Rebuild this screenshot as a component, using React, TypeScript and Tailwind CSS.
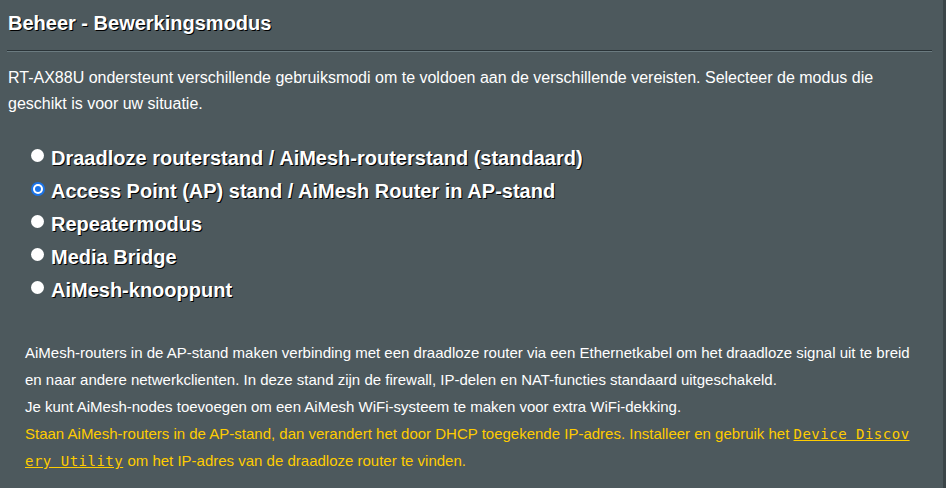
import React from "react";

const modes = [
  "Draadloze routerstand / AiMesh-routerstand (standaard)",
  "Access Point (AP) stand / AiMesh Router in AP-stand",
  "Repeatermodus",
  "Media Bridge",
  "AiMesh-knooppunt",
];

function Radio({ checked }: { checked: boolean }) {
  if (checked) {
    return (
      <span className="inline-flex h-[14px] w-[14px] shrink-0 items-center justify-center rounded-full bg-[#1a73e8]">
        <span className="flex h-[10px] w-[10px] items-center justify-center rounded-full bg-white">
          <span className="h-[6px] w-[6px] rounded-full bg-[#1a73e8]" />
        </span>
      </span>
    );
  }
  return <span className="inline-block h-[13px] w-[13px] shrink-0 rounded-full bg-white" />;
}

export default function App() {
  return (
    <div
      className="flex h-[488px] w-[946px] overflow-hidden bg-[#4d595d] text-white"
      style={{ fontFamily: '"Liberation Sans", Arial, sans-serif' }}
    >
      <div className="flex-1 pl-[8px] pr-[11px] pt-[12px]">
        <div className="text-[20px] font-bold leading-[23px] [text-shadow:1px_1px_0_#000]">
          Beheer - Bewerkingsmodus
        </div>
        <div className="mt-[15px] w-[925px] -ml-[1px]">
          <div className="h-px bg-[#2b3438]" />
          <div className="h-px bg-[#6b7b80]" />
        </div>
        <p className="mt-[13px] w-[924px] text-[16px] leading-[26px]">
          RT-AX88U ondersteunt verschillende gebruiksmodi om te voldoen aan de verschillende vereisten. Selecteer de modus die geschikt is voor uw situatie.
        </p>
        <div className="mt-[24px] flex flex-col pl-[23px]">
          {modes.map((m, i) => (
            <label key={m} className="flex h-[33px] items-center gap-[6px]">
              <span className="-mt-[4px] flex w-[14px] justify-start">
                <Radio checked={i === 1} />
              </span>
              <span className="text-[20px] font-bold leading-[24px] [text-shadow:1px_1px_0_#000]">{m}</span>
            </label>
          ))}
        </div>
        <div className="mt-[33px] w-[906px] pl-[17px] text-[15px] leading-[27px] break-all">
          <div>
            AiMesh-routers in de AP-stand maken verbinding met een draadloze router via een Ethernetkabel om het draadloze signal uit te breiden naar andere netwerkclienten. In deze stand zijn de firewall, IP-delen en NAT-functies standaard uitgeschakeld.
          </div>
          <div>Je kunt AiMesh-nodes toevoegen om een AiMesh WiFi-systeem te maken voor extra WiFi-dekking.</div>
          <div className="text-[#ffcc00]">
            Staan AiMesh-routers in de AP-stand, dan verandert het door DHCP toegekende IP-adres. Installeer en gebruik het{" "}
            <a
              className="cursor-pointer text-[14px] leading-[18px] tracking-[0.5px] underline"
              style={{ fontFamily: '"DejaVu Sans Mono", "Liberation Mono", monospace' }}
            >
              Device Discovery Utility
            </a>{" "}
            om het IP-adres van de draadloze router te vinden.
          </div>
        </div>
      </div>
      <div className="w-[3px] bg-[#3b4548]" />
    </div>
  );
}
